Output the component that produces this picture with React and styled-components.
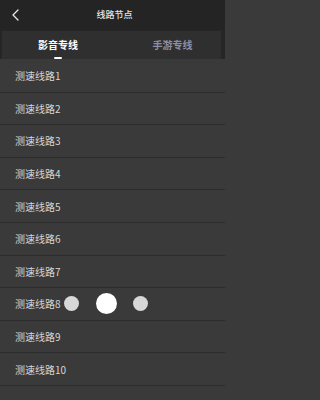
import React from "react";
import styled, { createGlobalStyle } from "styled-components";

const Global = createGlobalStyle`
  html, body { margin: 0; padding: 0; background: #3a3a3a; }
  body { font-family: "Noto Sans CJK SC", "Noto Sans", Roboto, sans-serif; }
`;

const Page = styled.div`
  position: relative;
  width: 225px;
  min-height: 400px;
  background: #3a3a3a;
  overflow: hidden;
`;

const Header = styled.header`
  height: 30px;
  background: #242424;
  display: grid;
  grid-template-columns: 40px 1fr 40px;
  align-items: center;
`;

const Back = styled.button`
  border: 0;
  background: none;
  padding: 0 0 0 11px;
  height: 30px;
  display: flex;
  align-items: center;
  cursor: pointer;
`;

const Title = styled.h1`
  margin: 0;
  padding-left: 4px;
  font-size: 9px;
  line-height: 12px;
  font-weight: 500;
  color: #e4e4e4;
  text-align: center;
`;

const TabBar = styled.nav`
  height: 29px;
  background: #262626;
  padding: 1px 4px 0 2px;
  box-sizing: border-box;
  display: grid;
  grid-template-columns: 112px 1fr;
`;

const Tab = styled.div`
  display: flex;
  flex-direction: column;
  align-items: center;
  background: #2f2f2f;
  padding-top: 8px;
  padding-left: ${(p) => p.$shift || 0}px;
  box-sizing: border-box;
`;

const TabLabel = styled.span`
  font-size: 10px;
  line-height: 12px;
  font-weight: 700;
  color: ${(p) => (p.$active ? "#ffffff" : "#8a8ea6")};
`;

const Indicator = styled.span`
  margin-top: 6px;
  width: 8px;
  height: 2px;
  border-radius: 1px;
  background: ${(p) => (p.$active ? "#ffffff" : "transparent")};
`;

const List = styled.ul`
  list-style: none;
  margin: 0;
  padding: 1px 0 0;
`;

const Row = styled.li`
  height: 32.6px;
  box-sizing: border-box;
  border-bottom: 1px solid #2c2c2c;
  display: flex;
  align-items: center;
  padding-left: 15px;
  font-size: 10px;
  color: #d6d6d6;
`;

const Loader = styled.div`
  position: absolute;
  left: 64px;
  top: 292px;
  width: 84px;
  height: 22px;
  display: flex;
  align-items: center;
  justify-content: space-between;
`;

const Dot = styled.span`
  width: ${(p) => (p.$big ? 21 : 15)}px;
  height: ${(p) => (p.$big ? 21 : 15)}px;
  border-radius: 50%;
  background: ${(p) => (p.$big ? "#ffffff" : "#d8d8d8")};
`;

export default function App() {
  const rows = Array.from({ length: 10 }, (_, i) => `测速线路${i + 1}`);
  return (
    <Page>
      <Global />
      <Header>
        <Back aria-label="返回">
          <svg width="8" height="12" viewBox="0 0 8 12">
            <polyline
              points="7,1 2,6 7,11"
              fill="none"
              stroke="#e8e8e8"
              strokeWidth="1.3"
              strokeLinecap="round"
              strokeLinejoin="round"
            />
          </svg>
        </Back>
        <Title>线路节点</Title>
        <span />
      </Header>
      <TabBar>
        <Tab>
          <TabLabel $active>影音专线</TabLabel>
          <Indicator $active />
        </Tab>
        <Tab $shift={10}>
          <TabLabel>手游专线</TabLabel>
          <Indicator />
        </Tab>
      </TabBar>
      <List>
        {rows.map((r) => (
          <Row key={r}>{r}</Row>
        ))}
      </List>
      <Loader>
        <Dot />
        <Dot $big />
        <Dot />
      </Loader>
    </Page>
  );
}
